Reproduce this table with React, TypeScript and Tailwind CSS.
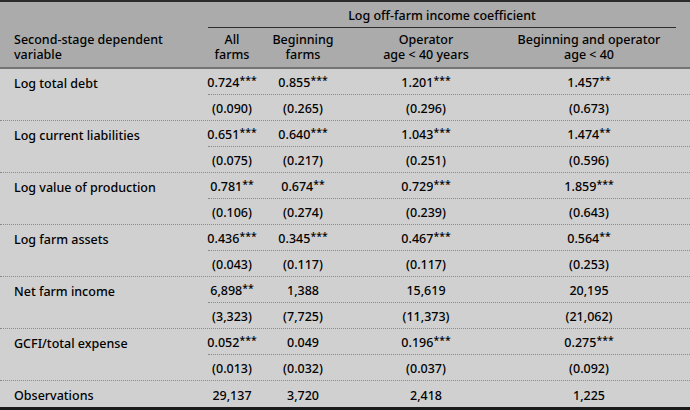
import React from 'react';

type Group = {
  label: string;
  coef: string[];
  se: string[];
};

const groups: Group[] = [
  { label: 'Log total debt', coef: ['0.724***', '0.855***', '1.201***', '1.457**'], se: ['(0.090)', '(0.265)', '(0.296)', '(0.673)'] },
  { label: 'Log current liabilities', coef: ['0.651***', '0.640***', '1.043***', '1.474**'], se: ['(0.075)', '(0.217)', '(0.251)', '(0.596)'] },
  { label: 'Log value of production', coef: ['0.781**', '0.674**', '0.729***', '1.859***'], se: ['(0.106)', '(0.274)', '(0.239)', '(0.643)'] },
  { label: 'Log farm assets', coef: ['0.436***', '0.345***', '0.467***', '0.564**'], se: ['(0.043)', '(0.117)', '(0.117)', '(0.253)'] },
  { label: 'Net farm income', coef: ['6,898**', '1,388', '15,619', '20,195'], se: ['(3,323)', '(7,725)', '(11,373)', '(21,062)'] },
  { label: 'GCFI/total expense', coef: ['0.052***', '0.049', '0.196***', '0.275***'], se: ['(0.013)', '(0.032)', '(0.037)', '(0.092)'] },
];

const widths = ['w-[48px]', 'w-[94px]', 'w-[152px]', 'w-[174px]'];

// splits "0.724***" into number and stars so stars can be drawn smaller
function Value({ v }: { v: string }) {
  const m = v.match(/^(.*?)(\**)$/);
  const num = m ? m[1] : v;
  const stars = m ? m[2] : '';
  return (
    <span className="whitespace-nowrap">
      {num}
      {stars && <span className="text-[10.5px] relative -top-[3px]">{stars}</span>}
    </span>
  );
}

function Cells({ values }: { values: string[] }) {
  return (
    <>
      {values.map((v, i) => (
        <div key={i} className={`${widths[i]} flex justify-center`}>
          <Value v={v} />
        </div>
      ))}
      <div className="w-[14px]" />
    </>
  );
}

export default function App() {
  return (
    <div
      className="w-[690px] h-[410px] flex flex-col bg-[#d0d0d0] text-black font-medium text-[12.5px] leading-[15px]"
      style={{ fontFamily: '"Noto Sans", "Open Sans", sans-serif' }}
    >
      {/* header */}
      <div className="h-[69px] bg-[#ababab] border-t-2 border-t-[#2b2b2b] border-b-2 border-b-[#747474] flex">
        <div className="w-[208px] pl-[14px] flex items-end pb-[5px]">
          <div>
            Second-stage dependent
            <br />
            variable
          </div>
        </div>
        <div className="flex-1 flex flex-col">
          <div className="h-[26px] mr-[14px] pt-[1px] border-b border-[#2e2e2e] flex items-center justify-center">
            Log off-farm income coefficient
          </div>
          <div className="flex-1 flex items-end pb-[5px] text-center">
            <div className="w-[48px]">All<br />farms</div>
            <div className="w-[94px]">Beginning<br />farms</div>
            <div className="w-[152px]">Operator<br />age &lt; 40 years</div>
            <div className="w-[174px]">Beginning and operator<br />age &lt; 40</div>
          </div>
        </div>
      </div>

      {/* body */}
      <div className="flex-1 flex flex-col">
        {groups.map((g) => (
          <React.Fragment key={g.label}>
            <div className="h-[26px] flex">
              <div className="w-[208px] pl-[14px] pt-[2px] flex items-center">{g.label}</div>
              <div className="flex-1 flex items-center pt-[2px] border-b border-dotted border-[#8a8a8a]">
                <Cells values={g.coef} />
              </div>
            </div>
            <div className="h-[26px] flex items-center pt-[2px] border-b border-dotted border-[#8a8a8a]">
              <div className="w-[208px]" />
              <Cells values={g.se} />
            </div>
          </React.Fragment>
        ))}
        <div className="flex-1 flex items-center pt-[2px] border-b-[3px] border-[#1a1a1a]">
          <div className="w-[208px] pl-[14px]">Observations</div>
          <Cells values={['29,137', '3,720', '2,418', '1,225']} />
        </div>
      </div>
    </div>
  );
}
